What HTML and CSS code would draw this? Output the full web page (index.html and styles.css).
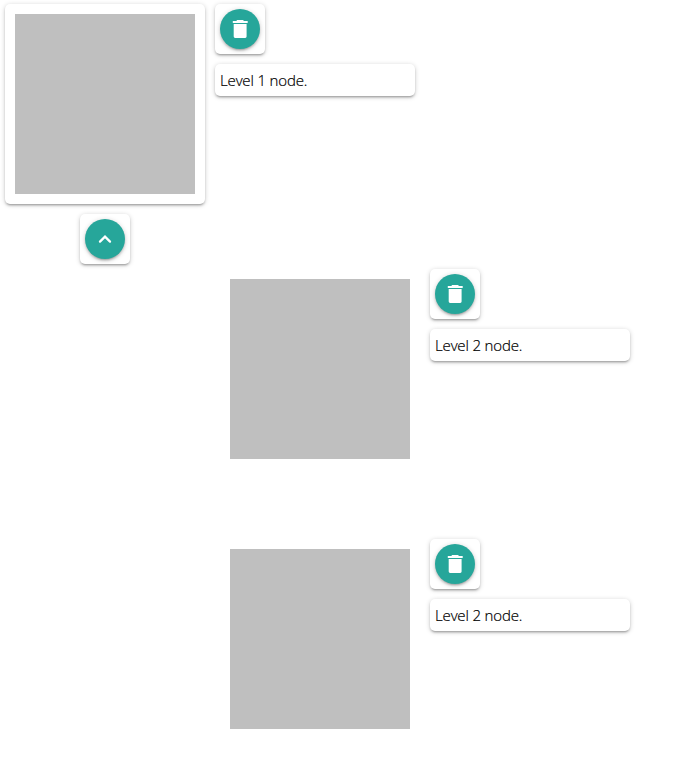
FILE: index.html
```html
<!DOCTYPE html>
<html lang="en">
<head>
<meta charset="utf-8">
<title>Node tree</title>
<link rel="stylesheet" href="styles.css">
</head>
<body>
<svg class="defs" width="0" height="0">
  <symbol id="trash" viewBox="0 0 24 24"><path d="M5.7 7h12.9v12.6a1.4 1.4 0 0 1-1.4 1.4H7.1a1.4 1.4 0 0 1-1.4-1.4zM4.8 4h3.5l.8-1h6l.8 1h3.8v2H4.8z"/></symbol>
</svg>
<div class="node">
  <div class="image-column">
    <div class="card picture"><div class="placeholder"></div></div>
    <div class="card action"><button class="round" aria-label="Collapse"><svg class="chevron" viewBox="0 0 24 24"><path d="M7 14.6l5-4.9 5 4.9"/></svg></button></div>
  </div>
  <div class="details">
    <div class="card action"><button class="round" aria-label="Delete"><svg viewBox="0 0 24 24"><use href="#trash"/></svg></button></div>
    <div class="card label">Level 1 node.</div>
  </div>
</div>
<div class="children">
  <div class="node">
    <div class="picture"><div class="placeholder"></div></div>
    <div class="details">
      <div class="card action"><button class="round" aria-label="Delete"><svg viewBox="0 0 24 24"><use href="#trash"/></svg></button></div>
      <div class="card label">Level 2 node.</div>
    </div>
  </div>
  <div class="node">
    <div class="picture"><div class="placeholder"></div></div>
    <div class="details">
      <div class="card action"><button class="round" aria-label="Delete"><svg viewBox="0 0 24 24"><use href="#trash"/></svg></button></div>
      <div class="card label">Level 2 node.</div>
    </div>
  </div>
</div>
</body>
</html>
```
FILE: styles.css
```css
* { box-sizing: border-box; }
body {
  margin: 0;
  padding: 4px 5px;
  background: #fff;
  color: #000;
  font: 300 15px/22px "Open Sans", "Noto Sans", sans-serif;
  letter-spacing: -0.15px;
  -webkit-text-stroke: 0.2px #000;
}
.defs { display: block; }
.node { display: flex; align-items: flex-start; gap: 10px; }
.image-column, .details { display: flex; flex-direction: column; gap: 10px; }
.image-column { align-items: center; }
.card {
  background: #fff;
  border-radius: 5px;
  box-shadow: 0 2px 2px 0 rgba(0, 0, 0, 0.14), 0 3px 1px -2px rgba(0, 0, 0, 0.12), 0 1px 5px 0 rgba(0, 0, 0, 0.2);
}
.picture { width: 200px; height: 200px; padding: 10px; }
.placeholder { height: 180px; background: #bfbfbf; }
.action { width: 50px; height: 50px; padding: 5px; }
.round {
  display: flex;
  align-items: center;
  justify-content: center;
  width: 40px;
  height: 40px;
  padding: 0;
  border: 0;
  border-radius: 50%;
  background: #26a69a;
  box-shadow: 0 2px 2px 0 rgba(0, 0, 0, 0.14), 0 3px 1px -2px rgba(0, 0, 0, 0.12), 0 1px 5px 0 rgba(0, 0, 0, 0.2);
}
.round svg { width: 24px; height: 24px; fill: #fff; }
.round .chevron { fill: none; stroke: #fff; stroke-width: 2.3; stroke-linecap: round; }
.label { width: 200px; height: 32px; padding: 5px; white-space: nowrap; }
.children { display: flex; flex-direction: column; gap: 70px; margin: 5px 0 0 215px; }
```
